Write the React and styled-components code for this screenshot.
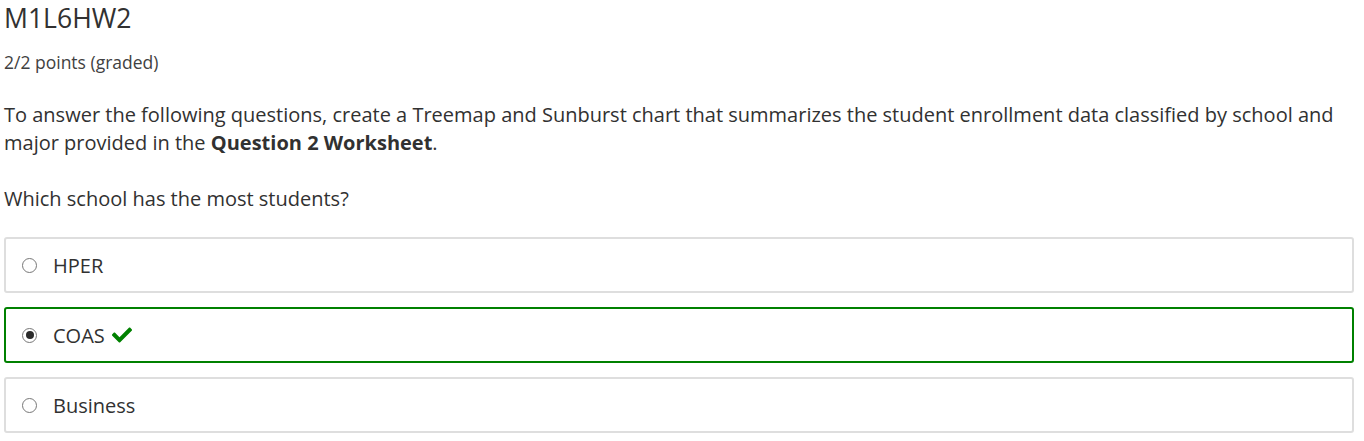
import React from "react";
import styled, { createGlobalStyle } from "styled-components";
import { FaCheck } from "react-icons/fa";

const GlobalStyle = createGlobalStyle`
  body {
    margin: 0;
    background: #fff;
    font-family: "Open Sans", "Liberation Sans", sans-serif;
    color: #313131;
  }
`;

const Container = styled.div`
  padding: 0 10px 0 4px;
`;

const Title = styled.h2`
  margin: 0;
  padding-top: 2px;
  font-size: 26.6px;
  font-weight: 400;
  line-height: 32px;
  color: #313131;
`;

const Points = styled.div`
  margin-top: 18px;
  font-size: 17.5px;
  line-height: 20px;
  color: #414141;
`;

const Prompt = styled.p`
  margin: 29px 0 0;
  font-size: 20px;
  line-height: 28px;
`;

const Question = styled.p`
  margin: 28px 0 0;
  font-size: 20px;
  line-height: 28px;
`;

const Choices = styled.div`
  margin-top: 24px;
  display: flex;
  flex-direction: column;
  gap: 14px;
`;

const Choice = styled.label`
  display: flex;
  align-items: center;
  height: 52px;
  padding: 0 16px;
  border: 2px solid ${(p) => (p.$correct ? "#008100" : "#dedede")};
  border-radius: 3px;
  font-size: 20px;
`;

const Radio = styled.span`
  position: relative;
  width: 15px;
  height: 15px;
  margin-right: 16px;
  border-radius: 50%;
  border: 1.5px solid #777;
  box-sizing: border-box;
  background: #fff;
  &::after {
    content: "";
    display: ${(p) => (p.$checked ? "block" : "none")};
    position: absolute;
    inset: 2.5px;
    border-radius: 50%;
    background: #2a2a2a;
  }
`;

const Check = styled(FaCheck)`
  margin-left: 7px;
  color: #008100;
  font-size: 20px;
`;

const choices = [
  { label: "HPER" },
  { label: "COAS", checked: true, correct: true },
  { label: "Business" },
];

export default function App() {
  return (
    <Container>
      <GlobalStyle />
      <Title>M1L6HW2</Title>
      <Points>2/2 points (graded)</Points>
      <Prompt>
        To answer the following questions, create a Treemap and Sunburst chart
        that summarizes the student enrollment data classified by school and
        major provided in the <strong>Question 2 Worksheet</strong>.
      </Prompt>
      <Question>Which school has the most students?</Question>
      <Choices>
        {choices.map((c) => (
          <Choice key={c.label} $correct={c.correct}>
            <Radio $checked={c.checked} />
            {c.label}
            {c.correct && <Check />}
          </Choice>
        ))}
      </Choices>
    </Container>
  );
}
